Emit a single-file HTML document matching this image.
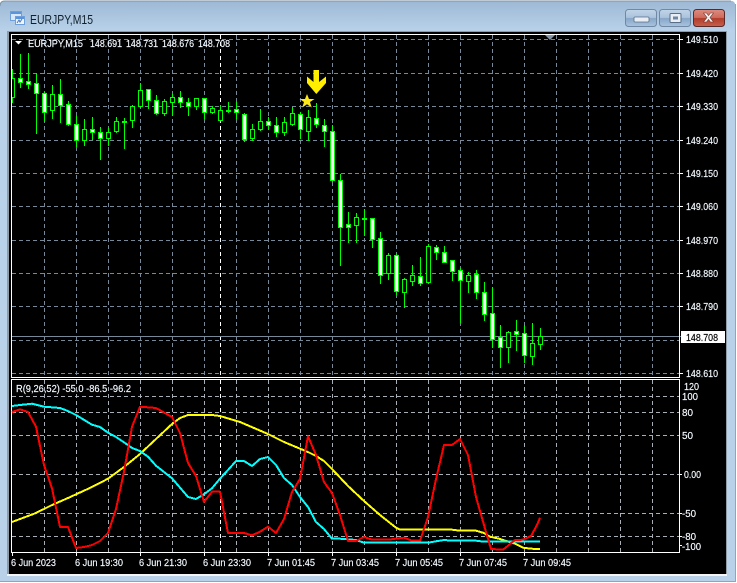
<!DOCTYPE html>
<html><head><meta charset="utf-8"><title>EURJPY,M15</title>
<style>
html,body{margin:0;padding:0;width:737px;height:583px;overflow:hidden;background:#fff}
svg{display:block}
text{font-family:"Liberation Sans",sans-serif;font-size:10.5px;fill:#fff;stroke:#dfeeff;stroke-width:.18px}
</style></head><body>
<svg width="737" height="583" viewBox="0 0 737 583" xmlns="http://www.w3.org/2000/svg">
<defs>
<linearGradient id="tb" x1="0" y1="0" x2="0" y2="1"><stop offset="0" stop-color="#9ab6d2"/><stop offset=".06" stop-color="#9fbad6"/><stop offset="1" stop-color="#b9d2ea"/></linearGradient>
<linearGradient id="bt" x1="0" y1="0" x2="0" y2="1"><stop offset="0" stop-color="#c2d5e8"/><stop offset=".48" stop-color="#a9c2dc"/><stop offset=".52" stop-color="#88a6c6"/><stop offset="1" stop-color="#a8c4e0"/></linearGradient>
<linearGradient id="rd" x1="0" y1="0" x2="0" y2="1"><stop offset="0" stop-color="#dc8d80"/><stop offset=".48" stop-color="#cf6a5c"/><stop offset=".52" stop-color="#b13c2c"/><stop offset="1" stop-color="#c8604c"/></linearGradient>
</defs>
<rect x="0" y="0" width="737" height="583" fill="#fff"/>
<path d="M0 6Q0 1 5 1H731Q735 1 735 5V582H0Z" fill="#b9d2ea"/>
<path d="M0 6Q0 1 5 1H731Q735 1 735 5V31H0Z" fill="url(#tb)"/>
<path d="M0 581.5H735.5V4" fill="none" stroke="#3fc8dc" stroke-width="1"/>
<path d="M0 6Q0 1 5 1H731" fill="none" stroke="#7f94a8" stroke-width="1"/>

<!-- icon -->
<rect x="10.5" y="11.5" width="11" height="9" fill="#d8e8fa" stroke="#6f9fd8"/>
<rect x="11" y="12" width="10" height="2" fill="#5c94dc"/>
<rect x="15.5" y="16.5" width="9" height="8" fill="#eef5ff" stroke="#6f9fd8"/>
<rect x="16" y="17" width="8" height="2" fill="#5c94dc"/>
<path d="M17 23l2-3 1 2 2-3" fill="none" stroke="#4a78b8"/>
<text x="30" y="24" textLength="63" lengthAdjust="spacingAndGlyphs" style="font-size:12.5px;fill:#10202c;stroke:none">EURJPY,M15</text>

<!-- buttons -->
<rect x="625.5" y="9.5" width="31" height="17" rx="3" fill="url(#bt)" stroke="#7188a4"/>
<rect x="634" y="17" width="15" height="5" rx="1" fill="#e8eef4" stroke="#5a6e88" stroke-width=".8"/>
<rect x="659.5" y="9.5" width="31" height="17" rx="3" fill="url(#bt)" stroke="#7188a4"/>
<rect x="670" y="13.5" width="11" height="9" rx="1" fill="#e8eef4" stroke="#5a6e88"/>
<rect x="673" y="16.5" width="5" height="3" fill="#6c86a4"/>
<rect x="693.5" y="9.5" width="31" height="17" rx="3" fill="url(#rd)" stroke="#5a2a2a"/>
<path d="M703.5 13h3l2 2.5 2-2.5h3l-3.500 4.500 3.500 4.500h-3l-2-2.500-2 2.500h-3l3.500-4.500z" fill="#f0f0f0" stroke="#6a3a34" stroke-width=".6"/>

<!-- client -->
<rect x="7" y="31" width="720" height="544" fill="#8f9ca8"/>
<rect x="9" y="32" width="717" height="542" fill="#000"/>
<rect x="7" y="574" width="720" height="2" fill="#f2f4f6"/>

<g shape-rendering="crispEdges">
<!-- main grid -->
<g fill="none" stroke="#778899" stroke-dasharray="4 3">
<path d="M12 39.500H679M12 73.500H679M12 106.500H679M12 140.500H679M12 173.500H679M12 206.500H679M12 240.500H679M12 273.500H679M12 306.500H679M12 340.500H679M12 373.500H679"/>
<path d="M44.500 35V377M76.500 35V377M108.500 35V377M140.500 35V377M172.500 35V377M204.500 35V377M236.500 35V377M268.500 35V377M300.500 35V377M332.500 35V377M364.500 35V377M396.500 35V377M428.500 35V377M460.500 35V377M492.500 35V377M524.500 35V377M556.500 35V377M588.500 35V377M620.500 35V377M652.500 35V377"/>
</g>
<path d="M220.500 35V377M220.500 380V552" fill="none" stroke="#fff" stroke-dasharray="4 3"/>
<path d="M12 336.500H681" stroke="#778899" fill="none"/>
<!-- sub grid -->
<g fill="none" stroke="#a8aeb6" stroke-dasharray="4 3">
<path d="M12 396.500H679M12 412.500H679M12 435.500H679M12 474.500H679M12 513.500H679M12 536.500H679"/>
<path d="M44.500 380V552M76.500 380V552M108.500 380V552M140.500 380V552M172.500 380V552M204.500 380V552M236.500 380V552M268.500 380V552M300.500 380V552M332.500 380V552M364.500 380V552M396.500 380V552M428.500 380V552M460.500 380V552M492.500 380V552M524.500 380V552M556.500 380V552M588.500 380V552M620.500 380V552M652.500 380V552"/>
</g>
<!-- wicks -->
<path fill="none" stroke="#0f0" d="M12.500 69V103M20.500 54V88M28.500 53V89M36.500 73V134M44.500 92V122M52.500 85V119M60.500 79V123M68.500 101V126M76.500 116V147M84.500 119V146M92.500 117V140M100.500 127V160M108.500 128V146M116.500 117V133M124.500 118V149M132.500 105V128M140.500 83V108M148.500 89V109M156.500 95V115M164.500 99V116M172.500 94V116M180.500 91V108M188.500 98V116M196.500 98V110M204.500 98V119M212.500 106V114M220.500 105V121M228.500 102V113M236.500 102V119M244.500 113V142M252.500 124V141M260.500 109V131M268.500 117V130M276.500 117V137M284.500 117V136M292.500 107V126M300.500 112V139M308.500 110V141M316.500 103V128M324.500 119V147M332.500 125V182M340.500 174V266M348.500 212V243M356.500 213V243M364.500 209V236M372.500 218V248M380.500 232V284M388.500 253V280M396.500 254V295M404.500 278V308M412.500 265V286M420.500 257V286M428.500 244V284M436.500 245V260M444.500 246V263M452.500 260V281M460.500 268V323M468.500 272V293M476.500 270V299M484.500 282V321M492.500 287V348M500.500 325V368M508.500 331V363M516.500 320V351M524.500 325V363M532.500 323V365M540.500 328V350"/>
<!-- bear bodies (white) -->
<g fill="#fff" stroke="#0f0">
<rect x="18.500" y="78.500" width="4" height="4"/><rect x="26.500" y="81.500" width="4" height="3"/><rect x="34.500" y="83.500" width="4" height="10"/><rect x="42.500" y="93.500" width="4" height="19"/><rect x="58.500" y="94.500" width="4" height="11"/><rect x="66.500" y="104.500" width="4" height="20"/><rect x="74.500" y="124.500" width="4" height="16"/><rect x="90.500" y="129.500" width="4" height="3"/><rect x="98.500" y="132.500" width="4" height="6"/><rect x="146.500" y="89.500" width="4" height="11"/><rect x="154.500" y="100.500" width="4" height="13"/><rect x="178.500" y="97.500" width="4" height="5"/><rect x="186.500" y="102.500" width="4" height="4"/><rect x="202.500" y="98.500" width="4" height="14"/><rect x="234.500" y="109.500" width="4" height="3"/><rect x="242.500" y="114.500" width="4" height="25"/><rect x="266.500" y="121.500" width="4" height="4"/><rect x="274.500" y="125.500" width="4" height="7"/><rect x="298.500" y="114.500" width="4" height="15"/><rect x="314.500" y="118.500" width="4" height="6"/><rect x="322.500" y="125.500" width="4" height="6"/><rect x="330.500" y="131.500" width="4" height="49"/><rect x="338.500" y="180.500" width="4" height="47"/><rect x="346.500" y="224.500" width="4" height="3"/><rect x="370.500" y="218.500" width="4" height="21"/><rect x="378.500" y="238.500" width="4" height="37"/><rect x="394.500" y="255.500" width="4" height="36"/><rect x="418.500" y="276.500" width="4" height="7"/><rect x="434.500" y="247.500" width="4" height="5"/><rect x="442.500" y="252.500" width="4" height="10"/><rect x="450.500" y="260.500" width="4" height="11"/><rect x="458.500" y="270.500" width="4" height="10"/><rect x="474.500" y="274.500" width="4" height="18"/><rect x="482.500" y="292.500" width="4" height="22"/><rect x="490.500" y="313.500" width="4" height="26"/><rect x="498.500" y="337.500" width="4" height="10"/><rect x="514.500" y="331.500" width="4" height="3"/><rect x="522.500" y="333.500" width="4" height="22"/>
</g>
<!-- bull bodies (black) -->
<g fill="#000" stroke="#0f0">
<rect x="10.500" y="78.500" width="4" height="19"/><rect x="50.500" y="94.500" width="4" height="16"/><rect x="82.500" y="129.500" width="4" height="11"/><rect x="106.500" y="132.500" width="4" height="6"/><rect x="114.500" y="121.500" width="4" height="10"/><rect x="130.500" y="106.500" width="4" height="14"/><rect x="138.500" y="90.500" width="4" height="16"/><rect x="162.500" y="101.500" width="4" height="12"/><rect x="170.500" y="97.500" width="4" height="5"/><rect x="194.500" y="98.500" width="4" height="8"/><rect x="210.500" y="108.500" width="4" height="4"/><rect x="218.500" y="110.500" width="4" height="10"/><rect x="250.500" y="129.500" width="4" height="9"/><rect x="258.500" y="121.500" width="4" height="8"/><rect x="282.500" y="122.500" width="4" height="10"/><rect x="290.500" y="113.500" width="4" height="11"/><rect x="306.500" y="117.500" width="4" height="14"/><rect x="354.500" y="217.500" width="4" height="8"/><rect x="386.500" y="255.500" width="4" height="18"/><rect x="402.500" y="279.500" width="4" height="13"/><rect x="410.500" y="275.500" width="4" height="6"/><rect x="426.500" y="246.500" width="4" height="36"/><rect x="466.500" y="275.500" width="4" height="6"/><rect x="506.500" y="332.500" width="4" height="15"/><rect x="530.500" y="343.500" width="4" height="13"/><rect x="538.500" y="336.500" width="4" height="8"/>
<rect x="122.500" y="121.500" width="4" height="1"/><rect x="226.500" y="110.500" width="4" height="1"/><rect x="362.500" y="218.500" width="4" height="1"/>
</g>
<rect x="9" y="60" width="2" height="60" fill="#000"/>
<!-- frames -->
<rect x="11.500" y="34.500" width="668" height="343" fill="none" stroke="#fff"/>
<rect x="11.500" y="379.500" width="668" height="173" fill="none" stroke="#fff"/>
<!-- ticks -->
<path stroke="#fff" fill="none" d="M680 39.500h3M680 73.500h3M680 106.500h3M680 140.500h3M680 173.500h3M680 206.500h3M680 240.500h3M680 273.500h3M680 306.500h3M680 373.500h3M680 474.500h2M680 513.500h2M680 536.500h2M680 545.500h2M12.500 553v3M76.500 553v3M140.500 553v3M204.500 553v3M268.500 553v3M332.500 553v3M396.500 553v3M460.500 553v3M524.500 553v3"/>
</g>

<!-- arrow, star, triangle -->
<path d="M313.500 70H319V82L326 76.500V83L316.300 94L307 83V76.500L313.500 82Z" fill="#ffee00"/>
<path d="M307 94l2 5h5.500l-4.500 3 1.700 5.500-4.700-3.300-4.700 3.300 1.700-5.500-4.500-3h5.500z" fill="#ffe81a"/>
<path d="M545 35h10l-5 5z" fill="#8494a6"/>
<path d="M15 41h7l-3.500 3.500z" fill="#fff"/>

<!-- indicator lines -->
<g fill="none" stroke-width="2" stroke-linejoin="round" shape-rendering="crispEdges">
<polyline stroke="#ff0" points="12,522 20,519 36,513 52,505 68,498 92,487 108,478.700 124,467 140,454 156,439 172,424 180,418 188,415 212,415 220,416 240,422 268,434 284,442 308,452 316,456 324,461 332,469 348,486 364,501 380,515 396,527.700 400,529.700 452,529.700 460,530.700 476,530.700 484,533 490,536.700 499,538.700 515,543.700 523,547.700 531,548.700 540,549"/>
<polyline stroke="#0ff" points="12,406 20,405 32,403.700 44,406.700 60,408 68,411 76,415 92,424.700 100,427 108,432.700 116,437 124,442.300 132,448 140,451 148,456.700 156,465.700 172,478.300 188,497 196,499 204,494.300 212,488.300 220,478.700 228,470 236,461 244,461 252,466 260,459 268,457 276,465 284,478 292,485 300,497 308,507 316,522 324,529 332,538.700 340,538.700 356,540 364,542.700 428,542.700 436,541.300 444,540 452,540.700 476,540.700 484,541.700 540,541.700"/>
<polyline stroke="#f00" points="12,412 20,409.300 28,412 36,426.700 44,465 52,488.300 60,527 68,527 76,548 84,547 92,545 100,541 108,533 116,509 124,471.700 132,426.700 140,406.700 156,408 172,417 180,433 188,463 196,476 204,502 212,491.700 220,491.700 228,533 244,533 252,535.300 260,531.700 268,526.700 276,533 284,519 292,492 300,479 308,436.300 316,455 324,482 332,493 340,515 348,541 356,541 364,537 372,539.700 388,539.700 404,537.700 412,540.700 420,540.700 428,517 436,479 444,445 452,445 460,439 468,455 476,497 484,525 491,549 503,549.700 515,540 523,539.700 531,536 537,525 540,517.700"/>
</g>

<!-- header text -->
<text x="28" y="47" textLength="55" lengthAdjust="spacingAndGlyphs">EURJPY,M15</text>
<text x="90" y="47" textLength="32" lengthAdjust="spacingAndGlyphs">148.691</text>
<text x="126" y="47" textLength="32" lengthAdjust="spacingAndGlyphs">148.731</text>
<text x="162" y="47" textLength="32" lengthAdjust="spacingAndGlyphs">148.676</text>
<text x="198" y="47" textLength="32" lengthAdjust="spacingAndGlyphs">148.708</text>
<text x="16" y="392" textLength="115" lengthAdjust="spacingAndGlyphs">R(9,26,52) -55.0 -86.5 -96.2</text>

<!-- price axis -->
<g>
<text x="686" y="43" textLength="32" lengthAdjust="spacingAndGlyphs">149.510</text>
<text x="686" y="77" textLength="32" lengthAdjust="spacingAndGlyphs">149.420</text>
<text x="686" y="110" textLength="32" lengthAdjust="spacingAndGlyphs">149.330</text>
<text x="686" y="144" textLength="32" lengthAdjust="spacingAndGlyphs">149.240</text>
<text x="686" y="177" textLength="32" lengthAdjust="spacingAndGlyphs">149.150</text>
<text x="686" y="210" textLength="32" lengthAdjust="spacingAndGlyphs">149.060</text>
<text x="686" y="244" textLength="32" lengthAdjust="spacingAndGlyphs">148.970</text>
<text x="686" y="277" textLength="32" lengthAdjust="spacingAndGlyphs">148.880</text>
<text x="686" y="310" textLength="32" lengthAdjust="spacingAndGlyphs">148.790</text>
<text x="686" y="377" textLength="32" lengthAdjust="spacingAndGlyphs">148.610</text>
</g>
<rect x="681" y="331" width="44" height="12" fill="#fff"/>
<text x="686" y="341" textLength="32" lengthAdjust="spacingAndGlyphs" style="fill:#000;stroke:#000">148.708</text>

<!-- indicator axis -->
<text x="684" y="390" textLength="15" lengthAdjust="spacingAndGlyphs">120</text>
<text x="682" y="400" textLength="16" lengthAdjust="spacingAndGlyphs">100</text>
<text x="682" y="416" textLength="11" lengthAdjust="spacingAndGlyphs">80</text>
<text x="682" y="439" textLength="11" lengthAdjust="spacingAndGlyphs">50</text>
<text x="684" y="478" textLength="17" lengthAdjust="spacingAndGlyphs">0.00</text>
<text x="682" y="517" textLength="14" lengthAdjust="spacingAndGlyphs">-50</text>
<text x="682" y="540" textLength="14" lengthAdjust="spacingAndGlyphs">-80</text>
<text x="682" y="550" textLength="19" lengthAdjust="spacingAndGlyphs">-100</text>

<!-- time axis -->
<text x="11" y="566" textLength="45" lengthAdjust="spacingAndGlyphs">6 Jun 2023</text>
<text x="75" y="566" textLength="48" lengthAdjust="spacingAndGlyphs">6 Jun 19:30</text>
<text x="139" y="566" textLength="48" lengthAdjust="spacingAndGlyphs">6 Jun 21:30</text>
<text x="203" y="566" textLength="48" lengthAdjust="spacingAndGlyphs">6 Jun 23:30</text>
<text x="267" y="566" textLength="48" lengthAdjust="spacingAndGlyphs">7 Jun 01:45</text>
<text x="331" y="566" textLength="48" lengthAdjust="spacingAndGlyphs">7 Jun 03:45</text>
<text x="395" y="566" textLength="48" lengthAdjust="spacingAndGlyphs">7 Jun 05:45</text>
<text x="459" y="566" textLength="48" lengthAdjust="spacingAndGlyphs">7 Jun 07:45</text>
<text x="523" y="566" textLength="48" lengthAdjust="spacingAndGlyphs">7 Jun 09:45</text>
</svg>
</body></html>
